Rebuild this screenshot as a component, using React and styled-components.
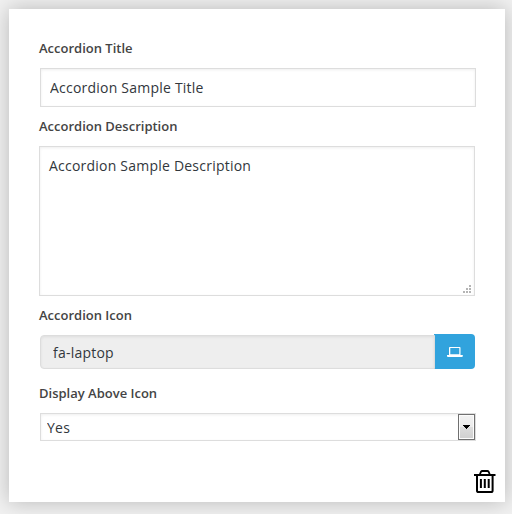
import React from "react";
import styled, { createGlobalStyle, css } from "styled-components";

const GlobalStyle = createGlobalStyle`
  *, *::before, *::after { box-sizing: border-box; }
  body {
    margin: 0;
    background: #f1f1f1;
    font-family: "Open Sans", sans-serif;
    color: #444;
    overflow: hidden;
  }
`;

const Page = styled.main`
  height: 514px;
  padding: 9px 7px 12px 9px;
`;

const Panel = styled.form`
  display: flex;
  flex-direction: column;
  height: 493px;
  padding: 30px 9px 8px 30px;
  background: #fff;
  box-shadow: 0 0 20px rgba(0, 0, 0, 0.24);
`;

const Field = styled.div`
  display: flex;
  flex-direction: column;
  width: 437px;
  height: ${(p) => p.$height}px;
`;

const Label = styled.label`
  height: ${(p) => p.$height || 29}px;
  font-size: 13px;
  font-weight: 600;
  line-height: 18px;
  color: #444;
`;

const control = css`
  display: block;
  margin: 0;
  border: 1px solid #ddd;
  border-radius: 0;
  outline: none;
  background: #fff;
  box-shadow: inset 0 1px 3px rgba(0, 0, 0, 0.07);
  color: #32373c;
  font: 14px/20px "Open Sans", sans-serif;
  letter-spacing: 0.22px;
`;

const TextInput = styled.input`
  ${control}
  width: 436px;
  height: 39px;
  margin-left: 1px;
  padding: 0 9px;
`;

const TextArea = styled.textarea`
  ${control}
  width: 436px;
  height: 150px;
  padding: 9px;
  resize: none;
`;

const AreaWrap = styled.div`
  position: relative;
  width: 436px;
`;

const Grip = styled.svg`
  position: absolute;
  right: 4px;
  bottom: 3px;
  width: 8px;
  height: 8px;
  fill: #b4b4b4;
`;

const IconGroup = styled.div`
  display: flex;
  align-items: flex-end;
  width: 435px;
  height: 35px;
  margin-left: 1px;
`;

const IconInput = styled.input`
  ${control}
  position: relative;
  z-index: 1;
  width: 395px;
  height: 34px;
  padding: 0 12px;
  border-radius: 4px 0 0 4px;
  background: #eee;
`;

const IconButton = styled.button`
  display: flex;
  align-items: center;
  justify-content: center;
  width: 41px;
  height: 35px;
  margin: 0 0 0 -1px;
  padding: 0 0 0 1px;
  border: 0;
  border-radius: 0 4px 4px 0;
  background: #31a3dd;
`;

const SelectBox = styled.div`
  display: flex;
  width: 436px;
  height: 28px;
  margin-left: 1px;
  border: 1px solid #ddd;
  background: #fff;
  box-shadow: inset 0 1px 3px rgba(0, 0, 0, 0.07);
`;

const Select = styled.select`
  flex: 1;
  appearance: none;
  padding: 1px 6px 0;
  border: 0;
  outline: none;
  background: transparent;
  color: #32373c;
  font: 14px/25px "Open Sans", sans-serif;
  letter-spacing: 0.22px;
`;

const SelectArrow = styled.span`
  display: flex;
  align-items: center;
  justify-content: center;
  width: 17px;
  height: 26px;
  border: 1px solid #707070;
  box-shadow: inset 0 0 0 1px #fcfcfc;
  background: linear-gradient(#f2f2f2, #ebebeb 50%, #dddddd 50%, #cfcfcf);
`;

const DeleteButton = styled.button`
  align-self: flex-end;
  width: 22px;
  height: 24px;
  margin-top: auto;
  padding: 0;
  border: 0;
  background: none;
  line-height: 0;
`;

const gripDots = [[6, 0], [3, 3], [6, 3], [0, 6], [3, 6], [6, 6]];

const LaptopIcon = () => (
  <svg width="16" height="10" viewBox="0 0 16 10" fill="#fff">
    <path fillRule="evenodd" d="M2.8 0h9.9a.8.8 0 0 1 .8.8V8H2V.8a.8.8 0 0 1 .8-.8ZM3.3 1v6.3h9V1Z" />
    <path d="M0 8h15.8v1a1 1 0 0 1-1 1H1a1 1 0 0 1-1-1Z" />
  </svg>
);

const TrashIcon = () => (
  <svg width="22" height="24" viewBox="0 0 22 24" fill="none" stroke="#000">
    <path d="M0 5h21.5" strokeWidth="2" />
    <path d="M5.8 4.5 7 1.7Q7.4 1 8.3 1h5q.9 0 1.3.7l1.2 2.8" strokeWidth="1.8" />
    <path d="M3 5v15.4q0 1.6 1.6 1.6h12.4q1.6 0 1.6-1.6V5" strokeWidth="2" />
    <path d="M6.9 9v9M10.8 9v9M14.7 9v9" strokeWidth="2" />
  </svg>
);

export default function App() {
  return (
    <>
      <GlobalStyle />
      <Page>
        <Panel>
          <Field $height={78}>
            <Label htmlFor="title">Accordion Title</Label>
            <TextInput id="title" defaultValue="Accordion Sample Title" />
          </Field>
          <Field $height={189}>
            <Label htmlFor="description">Accordion Description</Label>
            <AreaWrap>
              <TextArea id="description" spellCheck="false" defaultValue="Accordion Sample Description" />
              <Grip viewBox="0 0 8 8">
                {gripDots.map(([x, y]) => (
                  <rect key={`${x}-${y}`} x={x} y={y} width="2" height="2" />
                ))}
              </Grip>
            </AreaWrap>
          </Field>
          <Field $height={78}>
            <Label $height={28} htmlFor="icon">Accordion Icon</Label>
            <IconGroup>
              <IconInput id="icon" readOnly value="fa-laptop" />
              <IconButton type="button" aria-label="Choose icon"><LaptopIcon /></IconButton>
            </IconGroup>
          </Field>
          <Field $height={60}>
            <Label htmlFor="display">Display Above Icon</Label>
            <SelectBox>
              <Select id="display" defaultValue="Yes">
                <option>Yes</option>
              </Select>
              <SelectArrow>
                <svg width="7" height="4" viewBox="0 0 7 4" shapeRendering="crispEdges">
                  <path d="M0 0h7v1H6v1H5v1H4v1H3V3H2V2H1V1H0Z" />
                </svg>
              </SelectArrow>
            </SelectBox>
          </Field>
          <DeleteButton type="button" aria-label="Delete"><TrashIcon /></DeleteButton>
        </Panel>
      </Page>
    </>
  );
}
